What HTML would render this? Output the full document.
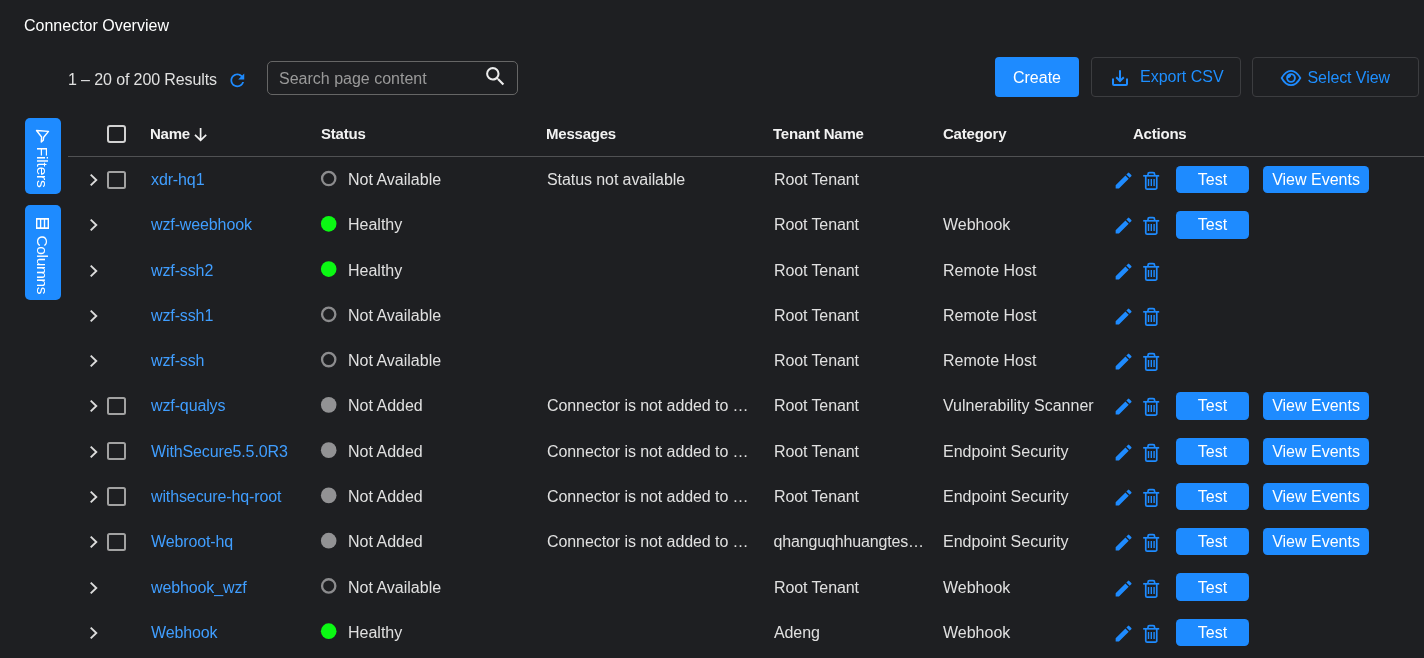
<!DOCTYPE html>
<html><head><meta charset="utf-8"><title>Connector Overview</title>
<style>
*{box-sizing:border-box;margin:0;padding:0}
html,body{width:1424px;height:658px;overflow:hidden;background:#1e1f22;font-family:"Liberation Sans",Arial,sans-serif;color:#e0e0e0}
#wrap{position:absolute;left:0;top:0;width:1424px;height:658px;overflow:hidden;will-change:transform}
h1{position:absolute;left:24px;top:17px;font-size:16px;font-weight:400;color:#fff;line-height:18px}
.res{position:absolute;left:68px;top:71px;font-size:16px;line-height:18px;color:#e0e0e0;letter-spacing:-0.11px;white-space:nowrap}
.search{position:absolute;left:267px;top:61px;width:251px;height:34px;border:1px solid #666;border-radius:5px;font-size:16px;color:#9a9a9a;line-height:34px;padding-left:11px}
.bcreate{position:absolute;left:995px;top:57px;width:84px;height:40px;background:#1e8bff;border-radius:4px;color:#fff;font-size:16px;line-height:42px;text-align:center}
.bout{position:absolute;top:57px;height:40px;border:1px solid #3c3d40;border-radius:4px;color:#1e8fff;font-size:16px;line-height:38px;white-space:nowrap}
.side{position:absolute;left:25px;width:36px;background:#1e8bff;border-radius:5px;color:#fff}
.side span{position:absolute;left:0;top:0;transform-origin:0 0;font-size:15.500px;letter-spacing:-0.200px;white-space:nowrap;line-height:18px}
.side svg{position:absolute}
.hdr{position:absolute;top:125px;font-size:15px;letter-spacing:-0.220px;font-weight:700;color:#f2f2f2;line-height:18px;white-space:nowrap}
.sep{position:absolute;left:68px;right:0;top:156px;height:1px;background:#505153}
.row{position:absolute;left:0;width:1424px;height:44px;font-size:16px;line-height:44px}
.row>*{position:absolute;top:0;white-space:nowrap}
.c{color:#e0e0e0}
.cv{left:88.600px;width:10px;height:14px;line-height:0}
.chev{width:10px;height:14px;display:block}
.cb{left:107.250px;width:18.600px;height:18.100px;border:2px solid #a2a2a2;border-radius:2.500px}
.hcb{position:absolute;left:107px;top:125px;width:19px;height:18px;border:2px solid #d2d2d2;border-radius:3px}
.nm{left:151px;color:#409eff;letter-spacing:-0.120px}
.dot{left:320px;display:block}
.stt{left:348px}
.msg{left:547px;letter-spacing:-0.080px}
.ten{left:774px;letter-spacing:-0.100px}.ten i{font-style:normal;letter-spacing:-0.150px;margin-left:-0.500px}
.cat{left:943px}
.ic{width:21.200px;height:21.200px;fill:#1e8bff;display:block}
.tic{width:18px;height:20px;display:block}
.pe{left:1113.050px;top:12.300px!important;line-height:0}
.tr{left:1142px;top:13px!important;line-height:0}
.btn{background:#1e8bff;color:#fff;border-radius:4.500px;height:27.250px;text-align:center}
.btn b{position:absolute;left:0;right:0;font-weight:400;line-height:44px}
.t1{left:1176px;width:73px}
.t2{left:1263px;width:106px}
</style></head><body><div id="wrap">
<h1>Connector Overview</h1>
<div class="res">1 – 20 of 200 Results</div>
<svg style="position:absolute;left:226.800px;top:69.900px" width="20.700" height="20.700" viewBox="0 0 24 24"><path fill="#1e8bff" d="M17.650 6.350C16.200 4.900 14.210 4 12 4c-4.420 0-7.990 3.580-7.990 8s3.570 8 7.990 8c3.730 0 6.840-2.550 7.730-6h-2.080c-.820 2.330-3.040 4-5.650 4-3.310 0-6-2.690-6-6s2.690-6 6-6c1.660 0 3.140.690 4.220 1.780L13 11h7V4l-2.350 2.350z"/></svg>
<div class="search">Search page content</div>
<svg style="position:absolute;left:482.700px;top:64.200px" width="24.800" height="24.800" viewBox="0 0 24 24"><path fill="#ececec" d="M15.500 14h-.790l-.280-.270A6.471 6.471 0 0 0 16 9.500 6.500 6.500 0 1 0 9.500 16c1.610 0 3.090-.590 4.230-1.570l.270.280v.790l5 4.990L20.490 19l-4.990-5zm-6 0C7.010 14 5 11.990 5 9.500S7.010 5 9.500 5 14 7.010 14 9.500 11.990 14 9.500 14z"/></svg>
<div class="bcreate">Create</div>
<div class="bout" style="left:1091px;width:150px;padding-left:48px">Export CSV</div>
<svg style="position:absolute;left:1112px;top:69.500px" width="16" height="17" viewBox="0 0 16 17" fill="none" stroke="#1e8bff" stroke-width="2"><path d="M1 8.500V14.100a1 1 0 0 0 1 1H14a1 1 0 0 0 1-1V8.500"/><path d="M8 0.300V10.800"/><path d="M4.200 7.200L8 11 11.800 7.200"/></svg>
<div class="bout" style="left:1252px;width:167px;padding-left:54.500px;line-height:40px;letter-spacing:-0.080px">Select View</div>
<svg style="position:absolute;left:1280px;top:69px" width="22" height="18" viewBox="0 0 22 18" fill="none" stroke="#1e8bff"><path stroke-width="1.800" d="M1.700 9C4.500 3.800 7.800 1.800 11 1.800S17.500 3.800 20.300 9C17.500 14.200 14.200 16.200 11 16.200S4.500 14.200 1.700 9Z"/><circle cx="11" cy="9" r="3.900" stroke-width="1.900"/><path d="M11 5.500A3.500 3.500 0 0 0 7.500 9h2A1.500 1.500 0 0 1 11 7.500z" fill="#1e8bff" stroke="none"/></svg>
<div class="side" style="top:118px;height:76px"><svg style="left:10px;top:11px" width="16" height="15" viewBox="0 0 16 15" fill="none" stroke="#fff" stroke-width="1.400" stroke-linejoin="round"><path d="M1.500 1.500L13.500 2.400 8.700 8.200 8.300 11.200 6.300 13 6.600 8z"/></svg><span style="transform:translate(25.900px,28.800px) rotate(90deg)">Filters</span></div>
<div class="side" style="top:205px;height:95px"><svg style="left:11px;top:13px" width="13" height="11" viewBox="0 0 13 11" fill="none" stroke="#fff"><path stroke-width="1.800" d="M0 0.900H13M0 10.100H13"/><path stroke-width="1.400" d="M0.700 0V11M4.600 0V11M8.500 0V11M12.300 0V11"/></svg><span style="transform:translate(25.800px,30.500px) rotate(90deg);letter-spacing:-0.350px">Columns</span></div>
<div class="hcb"></div>
<div class="hdr" style="left:150px">Name</div>
<svg style="position:absolute;left:193px;top:127px" width="15" height="15" viewBox="0 0 15 15" fill="none" stroke="#f2f2f2" stroke-width="1.700"><path d="M7.600 1V13M2 7.800L7.600 13.300 13.200 7.800"/></svg>
<div class="hdr" style="left:321px">Status</div>
<div class="hdr" style="left:546px">Messages</div>
<div class="hdr" style="left:773px">Tenant Name</div>
<div class="hdr" style="left:943px">Category</div>
<div class="hdr" style="left:1133px">Actions</div>
<div class="sep"></div>
<div class="row" style="top:158px"><span class="cv" style="top:15.17px"><svg class="chev" viewBox="0 0 10 14"><path d="M1.700 1.600L7.300 7 1.700 12.400" fill="none" stroke="#dcdcdc" stroke-width="1.900"/></svg></span><span class="cb" style="top:12.67px"></span><a class="c nm">xdr-hq1</a><svg class="dot" style="top:11px" width="18" height="20"><circle cx="8.700" cy="9.57" r="6.650" fill="none" stroke="#8c8c8e" stroke-width="2.300"/></svg><span class="c stt">Not Available</span><span class="c msg">Status not available</span><span class="c ten">Root Tenant</span><span class="pe"><svg class="ic" viewBox="0 0 24 24"><path d="M3 17.250V21h3.750L17.810 9.940l-3.750-3.750L3 17.250zM20.710 7.040a1 1 0 0 0 0-1.410l-2.340-2.340a1 1 0 0 0-1.410 0l-1.830 1.830 3.750 3.750 1.830-1.830z"/></svg></span><span class="tr"><svg class="tic" viewBox="0 0 18 20"><g fill="none" stroke="#1e8bff" stroke-width="1.700"><path d="M6 4.800V3.200a1.500 1.500 0 0 1 1.500-1.500h3.600a1.500 1.500 0 0 1 1.500 1.500V4.800"/><path d="M1.200 4.800H17.200"/><path d="M3.750 5V16.700a1.500 1.500 0 0 0 1.500 1.500h8a1.500 1.500 0 0 0 1.500-1.500V5"/></g><g stroke="#1e8bff" stroke-width="1.400"><path d="M6.500 7.900v7M9.300 7.900v7M12.100 7.900v7"/></g></svg></span><span class="btn t1" style="top:8.05px"><b style="top:-8.05px">Test</b></span><span class="btn t2" style="top:8.05px"><b style="top:-8.05px">View Events</b></span></div>
<div class="row" style="top:203px"><span class="cv" style="top:15.43px"><svg class="chev" viewBox="0 0 10 14"><path d="M1.700 1.600L7.300 7 1.700 12.400" fill="none" stroke="#dcdcdc" stroke-width="1.900"/></svg></span><a class="c nm">wzf-weebhook</a><svg class="dot" style="top:11px" width="18" height="20"><circle cx="8.700" cy="9.83" r="7.800" fill="#0bf813"/></svg><span class="c stt">Healthy</span><span class="c ten">Root Tenant</span><span class="c cat">Webhook</span><span class="pe"><svg class="ic" viewBox="0 0 24 24"><path d="M3 17.250V21h3.750L17.810 9.940l-3.750-3.750L3 17.250zM20.710 7.040a1 1 0 0 0 0-1.410l-2.340-2.340a1 1 0 0 0-1.410 0l-1.830 1.830 3.750 3.750 1.830-1.830z"/></svg></span><span class="tr"><svg class="tic" viewBox="0 0 18 20"><g fill="none" stroke="#1e8bff" stroke-width="1.700"><path d="M6 4.800V3.200a1.500 1.500 0 0 1 1.500-1.500h3.600a1.500 1.500 0 0 1 1.500 1.500V4.800"/><path d="M1.200 4.800H17.200"/><path d="M3.750 5V16.700a1.500 1.500 0 0 0 1.500 1.500h8a1.500 1.500 0 0 0 1.500-1.500V5"/></g><g stroke="#1e8bff" stroke-width="1.400"><path d="M6.500 7.900v7M9.300 7.900v7M12.100 7.900v7"/></g></svg></span><span class="btn t1" style="top:8.31px"><b style="top:-8.31px">Test</b></span></div>
<div class="row" style="top:249px"><span class="cv" style="top:14.69px"><svg class="chev" viewBox="0 0 10 14"><path d="M1.700 1.600L7.300 7 1.700 12.400" fill="none" stroke="#dcdcdc" stroke-width="1.900"/></svg></span><a class="c nm">wzf-ssh2</a><svg class="dot" style="top:11px" width="18" height="20"><circle cx="8.700" cy="9.09" r="7.800" fill="#0bf813"/></svg><span class="c stt">Healthy</span><span class="c ten">Root Tenant</span><span class="c cat">Remote Host</span><span class="pe"><svg class="ic" viewBox="0 0 24 24"><path d="M3 17.250V21h3.750L17.810 9.940l-3.750-3.750L3 17.250zM20.710 7.040a1 1 0 0 0 0-1.410l-2.340-2.340a1 1 0 0 0-1.410 0l-1.830 1.830 3.750 3.750 1.830-1.830z"/></svg></span><span class="tr"><svg class="tic" viewBox="0 0 18 20"><g fill="none" stroke="#1e8bff" stroke-width="1.700"><path d="M6 4.800V3.200a1.500 1.500 0 0 1 1.500-1.500h3.600a1.500 1.500 0 0 1 1.500 1.500V4.800"/><path d="M1.200 4.800H17.200"/><path d="M3.750 5V16.700a1.500 1.500 0 0 0 1.500 1.500h8a1.500 1.500 0 0 0 1.500-1.500V5"/></g><g stroke="#1e8bff" stroke-width="1.400"><path d="M6.500 7.900v7M9.300 7.900v7M12.100 7.900v7"/></g></svg></span></div>
<div class="row" style="top:294px"><span class="cv" style="top:14.95px"><svg class="chev" viewBox="0 0 10 14"><path d="M1.700 1.600L7.300 7 1.700 12.400" fill="none" stroke="#dcdcdc" stroke-width="1.900"/></svg></span><a class="c nm">wzf-ssh1</a><svg class="dot" style="top:11px" width="18" height="20"><circle cx="8.700" cy="9.35" r="6.650" fill="none" stroke="#8c8c8e" stroke-width="2.300"/></svg><span class="c stt">Not Available</span><span class="c ten">Root Tenant</span><span class="c cat">Remote Host</span><span class="pe"><svg class="ic" viewBox="0 0 24 24"><path d="M3 17.250V21h3.750L17.810 9.940l-3.750-3.750L3 17.250zM20.710 7.040a1 1 0 0 0 0-1.410l-2.340-2.340a1 1 0 0 0-1.410 0l-1.830 1.830 3.750 3.750 1.830-1.830z"/></svg></span><span class="tr"><svg class="tic" viewBox="0 0 18 20"><g fill="none" stroke="#1e8bff" stroke-width="1.700"><path d="M6 4.800V3.200a1.500 1.500 0 0 1 1.500-1.500h3.600a1.500 1.500 0 0 1 1.500 1.500V4.800"/><path d="M1.200 4.800H17.200"/><path d="M3.750 5V16.700a1.500 1.500 0 0 0 1.500 1.500h8a1.500 1.500 0 0 0 1.500-1.500V5"/></g><g stroke="#1e8bff" stroke-width="1.400"><path d="M6.500 7.900v7M9.300 7.900v7M12.100 7.900v7"/></g></svg></span></div>
<div class="row" style="top:339px"><span class="cv" style="top:15.21px"><svg class="chev" viewBox="0 0 10 14"><path d="M1.700 1.600L7.300 7 1.700 12.400" fill="none" stroke="#dcdcdc" stroke-width="1.900"/></svg></span><a class="c nm">wzf-ssh</a><svg class="dot" style="top:11px" width="18" height="20"><circle cx="8.700" cy="9.61" r="6.650" fill="none" stroke="#8c8c8e" stroke-width="2.300"/></svg><span class="c stt">Not Available</span><span class="c ten">Root Tenant</span><span class="c cat">Remote Host</span><span class="pe"><svg class="ic" viewBox="0 0 24 24"><path d="M3 17.250V21h3.750L17.810 9.940l-3.750-3.750L3 17.250zM20.710 7.040a1 1 0 0 0 0-1.410l-2.340-2.340a1 1 0 0 0-1.410 0l-1.830 1.830 3.750 3.750 1.830-1.830z"/></svg></span><span class="tr"><svg class="tic" viewBox="0 0 18 20"><g fill="none" stroke="#1e8bff" stroke-width="1.700"><path d="M6 4.800V3.200a1.500 1.500 0 0 1 1.500-1.500h3.600a1.500 1.500 0 0 1 1.500 1.500V4.800"/><path d="M1.200 4.800H17.200"/><path d="M3.750 5V16.700a1.500 1.500 0 0 0 1.500 1.500h8a1.500 1.500 0 0 0 1.500-1.500V5"/></g><g stroke="#1e8bff" stroke-width="1.400"><path d="M6.500 7.900v7M9.300 7.900v7M12.100 7.900v7"/></g></svg></span></div>
<div class="row" style="top:384px"><span class="cv" style="top:15.47px"><svg class="chev" viewBox="0 0 10 14"><path d="M1.700 1.600L7.300 7 1.700 12.400" fill="none" stroke="#dcdcdc" stroke-width="1.900"/></svg></span><span class="cb" style="top:12.97px"></span><a class="c nm">wzf-qualys</a><svg class="dot" style="top:11px" width="18" height="20"><circle cx="8.700" cy="9.87" r="7.800" fill="#929294"/></svg><span class="c stt">Not Added</span><span class="c msg">Connector is not added to …</span><span class="c ten">Root Tenant</span><span class="c cat">Vulnerability Scanner</span><span class="pe"><svg class="ic" viewBox="0 0 24 24"><path d="M3 17.250V21h3.750L17.810 9.940l-3.750-3.750L3 17.250zM20.710 7.040a1 1 0 0 0 0-1.410l-2.340-2.340a1 1 0 0 0-1.410 0l-1.830 1.830 3.750 3.750 1.830-1.830z"/></svg></span><span class="tr"><svg class="tic" viewBox="0 0 18 20"><g fill="none" stroke="#1e8bff" stroke-width="1.700"><path d="M6 4.800V3.200a1.500 1.500 0 0 1 1.500-1.500h3.600a1.500 1.500 0 0 1 1.500 1.500V4.800"/><path d="M1.200 4.800H17.200"/><path d="M3.750 5V16.700a1.500 1.500 0 0 0 1.500 1.500h8a1.500 1.500 0 0 0 1.500-1.500V5"/></g><g stroke="#1e8bff" stroke-width="1.400"><path d="M6.500 7.900v7M9.300 7.900v7M12.100 7.900v7"/></g></svg></span><span class="btn t1" style="top:8.35px"><b style="top:-8.35px">Test</b></span><span class="btn t2" style="top:8.35px"><b style="top:-8.35px">View Events</b></span></div>
<div class="row" style="top:430px"><span class="cv" style="top:14.73px"><svg class="chev" viewBox="0 0 10 14"><path d="M1.700 1.600L7.300 7 1.700 12.400" fill="none" stroke="#dcdcdc" stroke-width="1.900"/></svg></span><span class="cb" style="top:12.23px"></span><a class="c nm">WithSecure5.5.0R3</a><svg class="dot" style="top:11px" width="18" height="20"><circle cx="8.700" cy="9.13" r="7.800" fill="#929294"/></svg><span class="c stt">Not Added</span><span class="c msg">Connector is not added to …</span><span class="c ten">Root Tenant</span><span class="c cat">Endpoint Security</span><span class="pe"><svg class="ic" viewBox="0 0 24 24"><path d="M3 17.250V21h3.750L17.810 9.940l-3.750-3.750L3 17.250zM20.710 7.040a1 1 0 0 0 0-1.410l-2.340-2.340a1 1 0 0 0-1.410 0l-1.830 1.830 3.750 3.750 1.830-1.830z"/></svg></span><span class="tr"><svg class="tic" viewBox="0 0 18 20"><g fill="none" stroke="#1e8bff" stroke-width="1.700"><path d="M6 4.800V3.200a1.500 1.500 0 0 1 1.500-1.500h3.600a1.500 1.500 0 0 1 1.500 1.500V4.800"/><path d="M1.200 4.800H17.200"/><path d="M3.750 5V16.700a1.500 1.500 0 0 0 1.500 1.500h8a1.500 1.500 0 0 0 1.500-1.500V5"/></g><g stroke="#1e8bff" stroke-width="1.400"><path d="M6.500 7.900v7M9.300 7.900v7M12.100 7.900v7"/></g></svg></span><span class="btn t1" style="top:7.61px"><b style="top:-7.61px">Test</b></span><span class="btn t2" style="top:7.61px"><b style="top:-7.61px">View Events</b></span></div>
<div class="row" style="top:475px"><span class="cv" style="top:14.99px"><svg class="chev" viewBox="0 0 10 14"><path d="M1.700 1.600L7.300 7 1.700 12.400" fill="none" stroke="#dcdcdc" stroke-width="1.900"/></svg></span><span class="cb" style="top:12.49px"></span><a class="c nm">withsecure-hq-root</a><svg class="dot" style="top:11px" width="18" height="20"><circle cx="8.700" cy="9.39" r="7.800" fill="#929294"/></svg><span class="c stt">Not Added</span><span class="c msg">Connector is not added to …</span><span class="c ten">Root Tenant</span><span class="c cat">Endpoint Security</span><span class="pe"><svg class="ic" viewBox="0 0 24 24"><path d="M3 17.250V21h3.750L17.810 9.940l-3.750-3.750L3 17.250zM20.710 7.040a1 1 0 0 0 0-1.410l-2.340-2.340a1 1 0 0 0-1.410 0l-1.830 1.830 3.750 3.750 1.830-1.830z"/></svg></span><span class="tr"><svg class="tic" viewBox="0 0 18 20"><g fill="none" stroke="#1e8bff" stroke-width="1.700"><path d="M6 4.800V3.200a1.500 1.500 0 0 1 1.500-1.500h3.600a1.500 1.500 0 0 1 1.500 1.500V4.800"/><path d="M1.200 4.800H17.200"/><path d="M3.750 5V16.700a1.500 1.500 0 0 0 1.500 1.500h8a1.500 1.500 0 0 0 1.500-1.500V5"/></g><g stroke="#1e8bff" stroke-width="1.400"><path d="M6.500 7.900v7M9.300 7.900v7M12.100 7.900v7"/></g></svg></span><span class="btn t1" style="top:7.87px"><b style="top:-7.87px">Test</b></span><span class="btn t2" style="top:7.87px"><b style="top:-7.87px">View Events</b></span></div>
<div class="row" style="top:520px"><span class="cv" style="top:15.25px"><svg class="chev" viewBox="0 0 10 14"><path d="M1.700 1.600L7.300 7 1.700 12.400" fill="none" stroke="#dcdcdc" stroke-width="1.900"/></svg></span><span class="cb" style="top:12.75px"></span><a class="c nm">Webroot-hq</a><svg class="dot" style="top:11px" width="18" height="20"><circle cx="8.700" cy="9.65" r="7.800" fill="#929294"/></svg><span class="c stt">Not Added</span><span class="c msg">Connector is not added to …</span><span class="c ten"><i>qhanguqhhuangtes…</i></span><span class="c cat">Endpoint Security</span><span class="pe"><svg class="ic" viewBox="0 0 24 24"><path d="M3 17.250V21h3.750L17.810 9.940l-3.750-3.750L3 17.250zM20.710 7.040a1 1 0 0 0 0-1.410l-2.340-2.340a1 1 0 0 0-1.410 0l-1.830 1.830 3.750 3.750 1.830-1.830z"/></svg></span><span class="tr"><svg class="tic" viewBox="0 0 18 20"><g fill="none" stroke="#1e8bff" stroke-width="1.700"><path d="M6 4.800V3.200a1.500 1.500 0 0 1 1.500-1.500h3.600a1.500 1.500 0 0 1 1.500 1.500V4.800"/><path d="M1.200 4.800H17.200"/><path d="M3.750 5V16.700a1.500 1.500 0 0 0 1.500 1.500h8a1.500 1.500 0 0 0 1.500-1.500V5"/></g><g stroke="#1e8bff" stroke-width="1.400"><path d="M6.500 7.900v7M9.300 7.900v7M12.100 7.900v7"/></g></svg></span><span class="btn t1" style="top:8.13px"><b style="top:-8.13px">Test</b></span><span class="btn t2" style="top:8.13px"><b style="top:-8.13px">View Events</b></span></div>
<div class="row" style="top:566px"><span class="cv" style="top:14.51px"><svg class="chev" viewBox="0 0 10 14"><path d="M1.700 1.600L7.300 7 1.700 12.400" fill="none" stroke="#dcdcdc" stroke-width="1.900"/></svg></span><a class="c nm">webhook_wzf</a><svg class="dot" style="top:11px" width="18" height="20"><circle cx="8.700" cy="8.91" r="6.650" fill="none" stroke="#8c8c8e" stroke-width="2.300"/></svg><span class="c stt">Not Available</span><span class="c ten">Root Tenant</span><span class="c cat">Webhook</span><span class="pe"><svg class="ic" viewBox="0 0 24 24"><path d="M3 17.250V21h3.750L17.810 9.940l-3.750-3.750L3 17.250zM20.710 7.040a1 1 0 0 0 0-1.410l-2.340-2.340a1 1 0 0 0-1.410 0l-1.830 1.830 3.750 3.750 1.830-1.830z"/></svg></span><span class="tr"><svg class="tic" viewBox="0 0 18 20"><g fill="none" stroke="#1e8bff" stroke-width="1.700"><path d="M6 4.800V3.200a1.500 1.500 0 0 1 1.500-1.500h3.600a1.500 1.500 0 0 1 1.500 1.500V4.800"/><path d="M1.200 4.800H17.200"/><path d="M3.750 5V16.700a1.500 1.500 0 0 0 1.500 1.500h8a1.500 1.500 0 0 0 1.500-1.500V5"/></g><g stroke="#1e8bff" stroke-width="1.400"><path d="M6.500 7.900v7M9.300 7.900v7M12.100 7.900v7"/></g></svg></span><span class="btn t1" style="top:7.39px"><b style="top:-7.39px">Test</b></span></div>
<div class="row" style="top:611px"><span class="cv" style="top:14.77px"><svg class="chev" viewBox="0 0 10 14"><path d="M1.700 1.600L7.300 7 1.700 12.400" fill="none" stroke="#dcdcdc" stroke-width="1.900"/></svg></span><a class="c nm">Webhook</a><svg class="dot" style="top:11px" width="18" height="20"><circle cx="8.700" cy="9.17" r="7.800" fill="#0bf813"/></svg><span class="c stt">Healthy</span><span class="c ten">Adeng</span><span class="c cat">Webhook</span><span class="pe"><svg class="ic" viewBox="0 0 24 24"><path d="M3 17.250V21h3.750L17.810 9.940l-3.750-3.750L3 17.250zM20.710 7.040a1 1 0 0 0 0-1.410l-2.340-2.340a1 1 0 0 0-1.410 0l-1.830 1.830 3.750 3.750 1.830-1.830z"/></svg></span><span class="tr"><svg class="tic" viewBox="0 0 18 20"><g fill="none" stroke="#1e8bff" stroke-width="1.700"><path d="M6 4.800V3.200a1.500 1.500 0 0 1 1.500-1.500h3.600a1.500 1.500 0 0 1 1.500 1.500V4.800"/><path d="M1.200 4.800H17.200"/><path d="M3.750 5V16.700a1.500 1.500 0 0 0 1.500 1.500h8a1.500 1.500 0 0 0 1.500-1.500V5"/></g><g stroke="#1e8bff" stroke-width="1.400"><path d="M6.500 7.900v7M9.300 7.900v7M12.100 7.900v7"/></g></svg></span><span class="btn t1" style="top:7.65px"><b style="top:-7.65px">Test</b></span></div>
</div></body></html>
